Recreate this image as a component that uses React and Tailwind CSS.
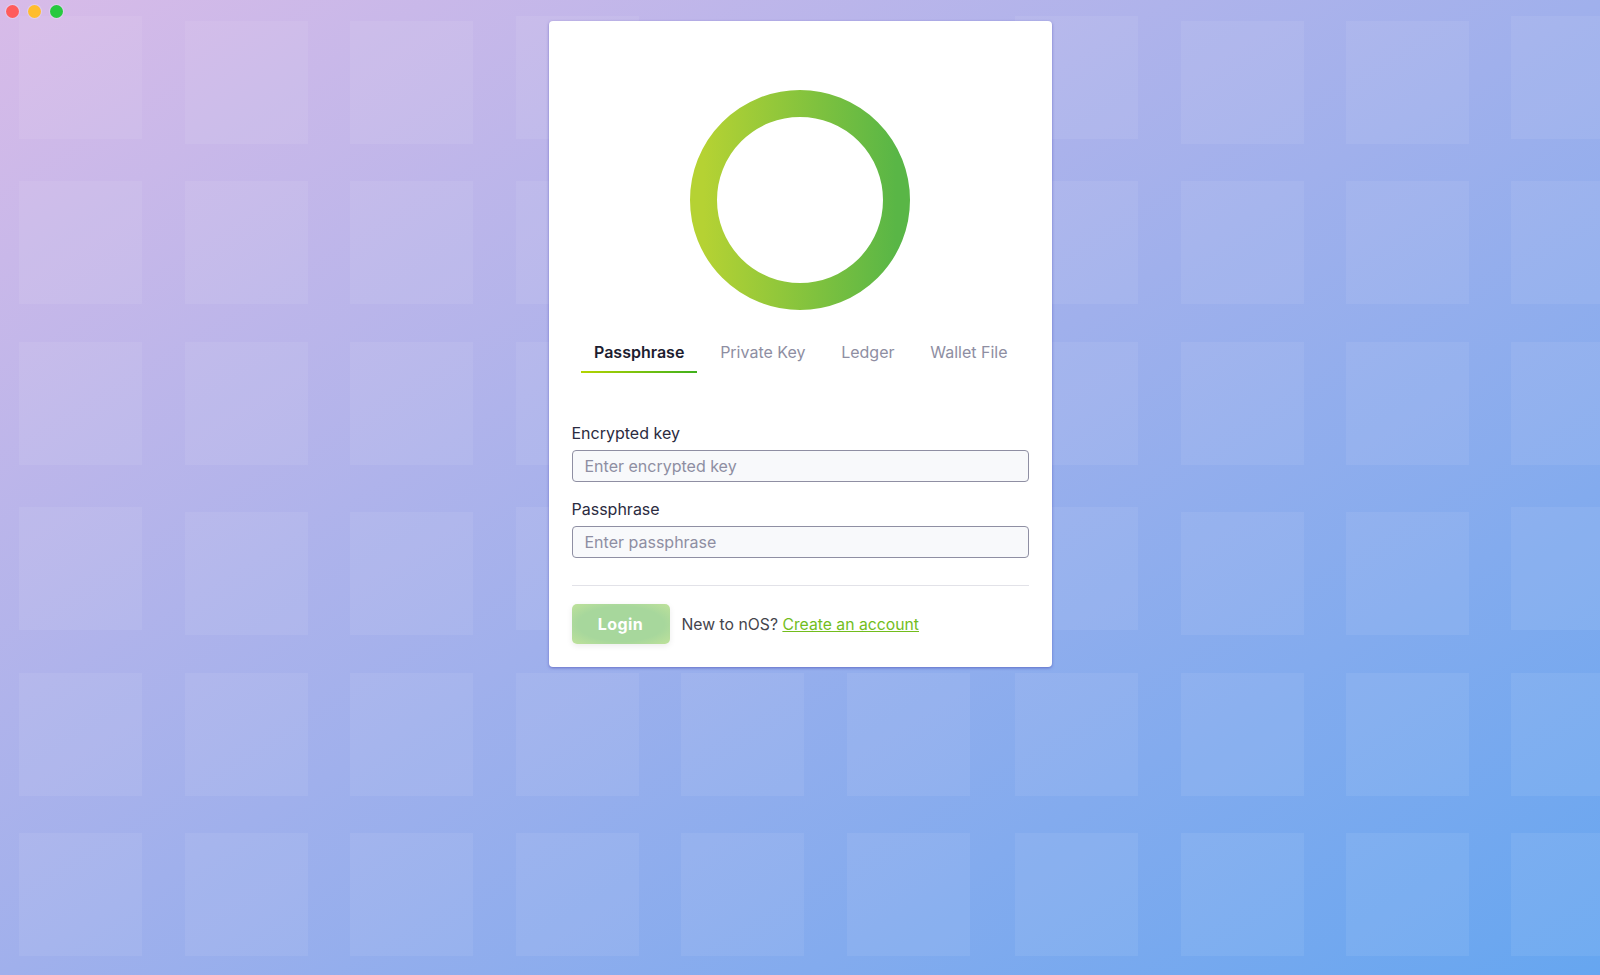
import React, { useState } from 'react';

// columns 0,3,6,9 sit a little higher on rows 1 and 4
const tileX = [19, 185, 350, 516, 681, 847, 1015, 1181, 1346, 1511];
const rowsA = [16, 181, 342, 507, 673, 833];
const rowsB = [21, 181, 342, 512, 673, 833];
const tabs = ['Passphrase', 'Private Key', 'Ledger', 'Wallet File'];

function Tiles() {
    return (
        <svg className="absolute inset-0 h-full w-full" viewBox="0 0 1600 975" preserveAspectRatio="none">
            {tileX.map((x, i) =>
                (i % 3 === 0 ? rowsA : rowsB).map((y) => (
                    <rect key={x + '-' + y} x={x} y={y} width="123" height="123" fill="#ffffff" fillOpacity="0.07" />
                ))
            )}
        </svg>
    );
}

function Ring() {
    return (
        <svg width="220" height="220" viewBox="0 0 220 220">
            <defs>
                <linearGradient id="ring" x1="0" y1="0" x2="1" y2="0">
                    <stop offset="0" stopColor="#b5d233" />
                    <stop offset="1" stopColor="#59b646" />
                </linearGradient>
            </defs>
            <circle cx="110" cy="110" r="96.5" fill="none" stroke="url(#ring)" strokeWidth="27" />
        </svg>
    );
}

function Field({ label, placeholder, type = 'text' }) {
    return (
        <div>
            <label className="block text-base leading-6 text-[#2b2b40] mb-[5px]">{label}</label>
            <input
                type={type}
                placeholder={placeholder}
                className="block w-full h-8 px-3 rounded border border-[#8f8fa3] bg-[#f8f9fb] text-base outline-none placeholder:text-[#8e8ea2]"
            />
        </div>
    );
}

export default function App() {
    const [active, setActive] = useState('Passphrase');

    return (
        <div className="relative h-screen overflow-hidden bg-[linear-gradient(to_bottom_right,#d8bbe8_0%,#a0b0ec_50%,#66a6f0_100%)] font-['Inter',sans-serif]">
            <Tiles />

            <div className="absolute left-[5.5px] top-[4.5px] flex gap-[9.25px]">
                <span className="h-[13px] w-[13px] rounded-full bg-[#ff5c5c] ring-1 ring-white/25" />
                <span className="h-[13px] w-[13px] rounded-full bg-[#ffbd2e] ring-1 ring-white/25" />
                <span className="h-[13px] w-[13px] rounded-full bg-[#27c93f] ring-1 ring-white/25" />
            </div>

            <div className="relative flex justify-center pt-[21px]">
                <div className="w-[503px] h-[646px] rounded bg-white px-[23px] pt-[69px] shadow-[0_1px_3px_rgba(60,60,170,0.55)]">
                    <div className="flex justify-center">
                        <Ring />
                    </div>

                    <div className="mt-[21px] ml-[9.5px] flex gap-[9.75px]">
                        {tabs.map((tab) => (
                            <button
                                key={tab}
                                onClick={() => setActive(tab)}
                                className={
                                    active === tab
                                        ? 'relative h-[42px] px-[13px] text-base font-semibold text-[#1d1d30]'
                                        : 'relative h-[42px] px-[13px] text-base text-[#8e8ea2]'
                                }
                            >
                                {tab}
                                {active === tab && (
                                    <span className="absolute inset-x-0 bottom-0 h-0.5 bg-[linear-gradient(to_right,#b4d400,#3fb01c)]" />
                                )}
                            </button>
                        ))}
                    </div>

                    <form className="mt-12 flex flex-col gap-[15px]" onSubmit={(e) => e.preventDefault()}>
                        <Field label="Encrypted key" placeholder="Enter encrypted key" />
                        <Field label="Passphrase" placeholder="Enter passphrase" type="password" />
                    </form>

                    <div className="mt-[27px] mb-[18px] h-px bg-[#e2e2e8]" />

                    <div className="flex items-center gap-3">
                        <button className="h-10 w-[98px] rounded-[5px] bg-[radial-gradient(ellipse_at_center,#a7d79c_62%,#bfe29b_100%)] text-base font-bold tracking-[0.4px] text-white shadow-[0_2px_6px_rgba(0,0,0,0.08)]">
                            Login
                        </button>
                        <p className="pt-px text-[15.75px] text-[#44444c]">
                            New to nOS?{' '}
                            <a href="#" className="text-[#72bd1c] underline">Create an account</a>
                        </p>
                    </div>
                </div>
            </div>
        </div>
    );
}
